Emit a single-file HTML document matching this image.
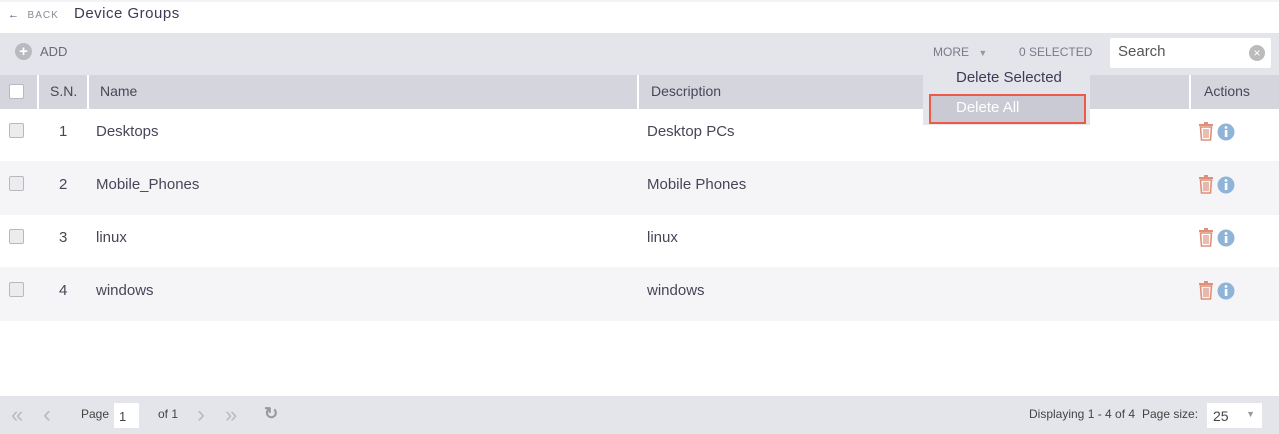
<!DOCTYPE html>
<html><head><style>
*{margin:0;padding:0;box-sizing:border-box}
body{width:1279px;height:434px;background:#fff;font-family:"Liberation Sans",sans-serif;color:#4a4458;position:relative;overflow:hidden}
.abs{position:absolute}
.cb{position:absolute;width:15px;height:15px;border:1px solid #b8b8c0;background:#ececef;border-radius:2px}
.row{position:absolute;left:0;width:1279px;height:53px;font-size:15px}
.row span{position:absolute;top:20px}
</style></head><body>
<div class="abs" style="top:0;left:0;width:1279px;height:2px;background:#f3f3f5"></div>
<div class="abs" style="left:8px;top:9px;font-size:10px;color:#4a4a6a;letter-spacing:1px"><b style="font-size:11px">&#8592;</b> <span style="color:#8a8a9a">&nbsp;BACK</span></div>
<div class="abs" style="left:74px;top:5px;font-size:15px;color:#3d3a55;letter-spacing:.5px">Device Groups</div>
<div class="abs" style="top:33px;left:0;width:1279px;height:42px;background:#e4e5ea"></div>
<div class="abs" style="left:15px;top:43px;width:17px;height:17px;border-radius:50%;background:#b9b9c0;color:#fff;font-size:15px;line-height:17px;text-align:center;font-weight:bold">+</div>
<div class="abs" style="left:40px;top:44px;font-size:13px;color:#6a6a78">ADD</div>
<div class="abs" style="left:933px;top:45px;font-size:12px;color:#7a7a88">MORE <span style="font-size:9px;color:#999;margin-left:6px">&#9660;</span></div>
<div class="abs" style="left:1019px;top:45px;font-size:12px;color:#7a7a88">0 SELECTED</div>
<div class="abs" style="left:1110px;top:38px;width:161px;height:30px;background:#fff;border-radius:2px"></div>
<div class="abs" style="left:1118px;top:43px;font-size:15px;color:#555">Search</div>
<div class="abs" style="left:1249px;top:45px;width:16px;height:16px;border-radius:50%;background:#bbb;color:#fff;font-size:12px;line-height:16px;text-align:center">×</div>
<div class="abs" style="top:75px;left:0;width:1279px;height:34px;background:#d5d6dd"></div>
<div class="abs" style="top:75px;left:37px;width:2px;height:34px;background:#fff"></div>
<div class="abs" style="top:75px;left:87px;width:2px;height:34px;background:#fff"></div>
<div class="abs" style="top:75px;left:637px;width:2px;height:34px;background:#fff"></div>
<div class="abs" style="top:75px;left:1189px;width:2px;height:34px;background:#fff"></div>
<div class="cb" style="left:9px;top:84px;background:#fff"></div>
<div class="abs" style="left:50px;top:83px;font-size:14px">S.N.</div>
<div class="abs" style="left:100px;top:83px;font-size:14px">Name</div>
<div class="abs" style="left:651px;top:83px;font-size:14px">Description</div>
<div class="abs" style="left:1204px;top:83px;font-size:14px">Actions</div>

<div class="row" style="top:109px;background:#fff"><div class="cb" style="left:9px;top:14px"></div><span style="left:59px;top:14px">1</span><span style="left:96px;top:14px">Desktops</span><span style="left:647px;top:14px">Desktop PCs</span></div>
<div class="row" style="top:161px;background:#f5f5f7;height:54px"><div class="cb" style="left:9px;top:15px"></div><span style="left:59px;top:15px">2</span><span style="left:96px;top:15px">Mobile_Phones</span><span style="left:647px;top:15px">Mobile Phones</span></div>
<div class="row" style="top:215px;background:#fff"><div class="cb" style="left:9px;top:14px"></div><span style="left:59px;top:14px">3</span><span style="left:96px;top:14px">linux</span><span style="left:647px;top:14px">linux</span></div>
<div class="row" style="top:267px;background:#f5f5f7;height:54px"><div class="cb" style="left:9px;top:15px"></div><span style="left:59px;top:15px">4</span><span style="left:96px;top:15px">windows</span><span style="left:647px;top:15px">windows</span></div>

<svg class="abs" style="left:0;top:0" width="1279" height="434">
<defs><g id="ic">
<rect x="0" y="1" width="14" height="2" fill="#e0907a"/><rect x="5" y="-1" width="4" height="2" fill="#e0907a"/>
<path d="M1.5 4 h11 l-1 13 h-9 z" fill="none" stroke="#e0907a" stroke-width="1.6"/>
<path d="M5 6v9M7 6v9M9 6v9" stroke="#e0907a" stroke-width="1.2"/>
<circle cx="27" cy="9" r="8.5" fill="#8fb4d8"/>
<rect x="25.8" y="7" width="2.6" height="7" fill="#fff"/><circle cx="27" cy="4.5" r="1.4" fill="#fff"/>
</g></defs>
<use href="#ic" x="1199" y="123"/><use href="#ic" x="1199" y="176"/><use href="#ic" x="1199" y="229"/><use href="#ic" x="1199" y="282"/>
</svg>

<div class="abs" style="left:923px;top:66px;width:167px;height:59px;background:#e4e5ea"></div>
<div class="abs" style="left:956px;top:69px;font-size:15px;color:#3d3a55">Delete Selected</div>
<div class="abs" style="left:929px;top:94px;width:157px;height:30px;background:#c9cad3;border:2px solid #ee5a4a"></div>
<div class="abs" style="left:956px;top:99px;font-size:15px;color:#fff">Delete All</div>

<div class="abs" style="top:396px;left:0;width:1279px;height:38px;background:#e4e5ea"></div>
<div class="abs" style="left:11px;top:402px;font-size:22px;color:#bbb">«</div>
<div class="abs" style="left:43px;top:401px;font-size:24px;color:#bbb">‹</div>
<div class="abs" style="left:81px;top:407px;font-size:12px;color:#444">Page</div>
<div class="abs" style="left:114px;top:403px;width:25px;height:25px;background:#fff;font-size:13px;padding:6px 5px;color:#444">1</div>
<div class="abs" style="left:158px;top:407px;font-size:12px;color:#444">of 1</div>
<div class="abs" style="left:197px;top:401px;font-size:24px;color:#bbb">›</div>
<div class="abs" style="left:225px;top:402px;font-size:22px;color:#bbb">»</div>
<div class="abs" style="left:264px;top:404px;font-size:17px;color:#999;font-weight:bold">&#8635;</div>
<div class="abs" style="left:1029px;top:407px;font-size:12px;color:#444">Displaying 1 - 4 of 4</div>
<div class="abs" style="left:1142px;top:407px;font-size:12px;color:#444">Page size:</div>
<div class="abs" style="left:1207px;top:403px;width:55px;height:25px;background:#fff;font-size:14px;padding:5px 6px;color:#444">25<span style="position:absolute;right:7px;top:6px;font-size:9px;color:#999">&#9660;</span></div>
</body></html>
